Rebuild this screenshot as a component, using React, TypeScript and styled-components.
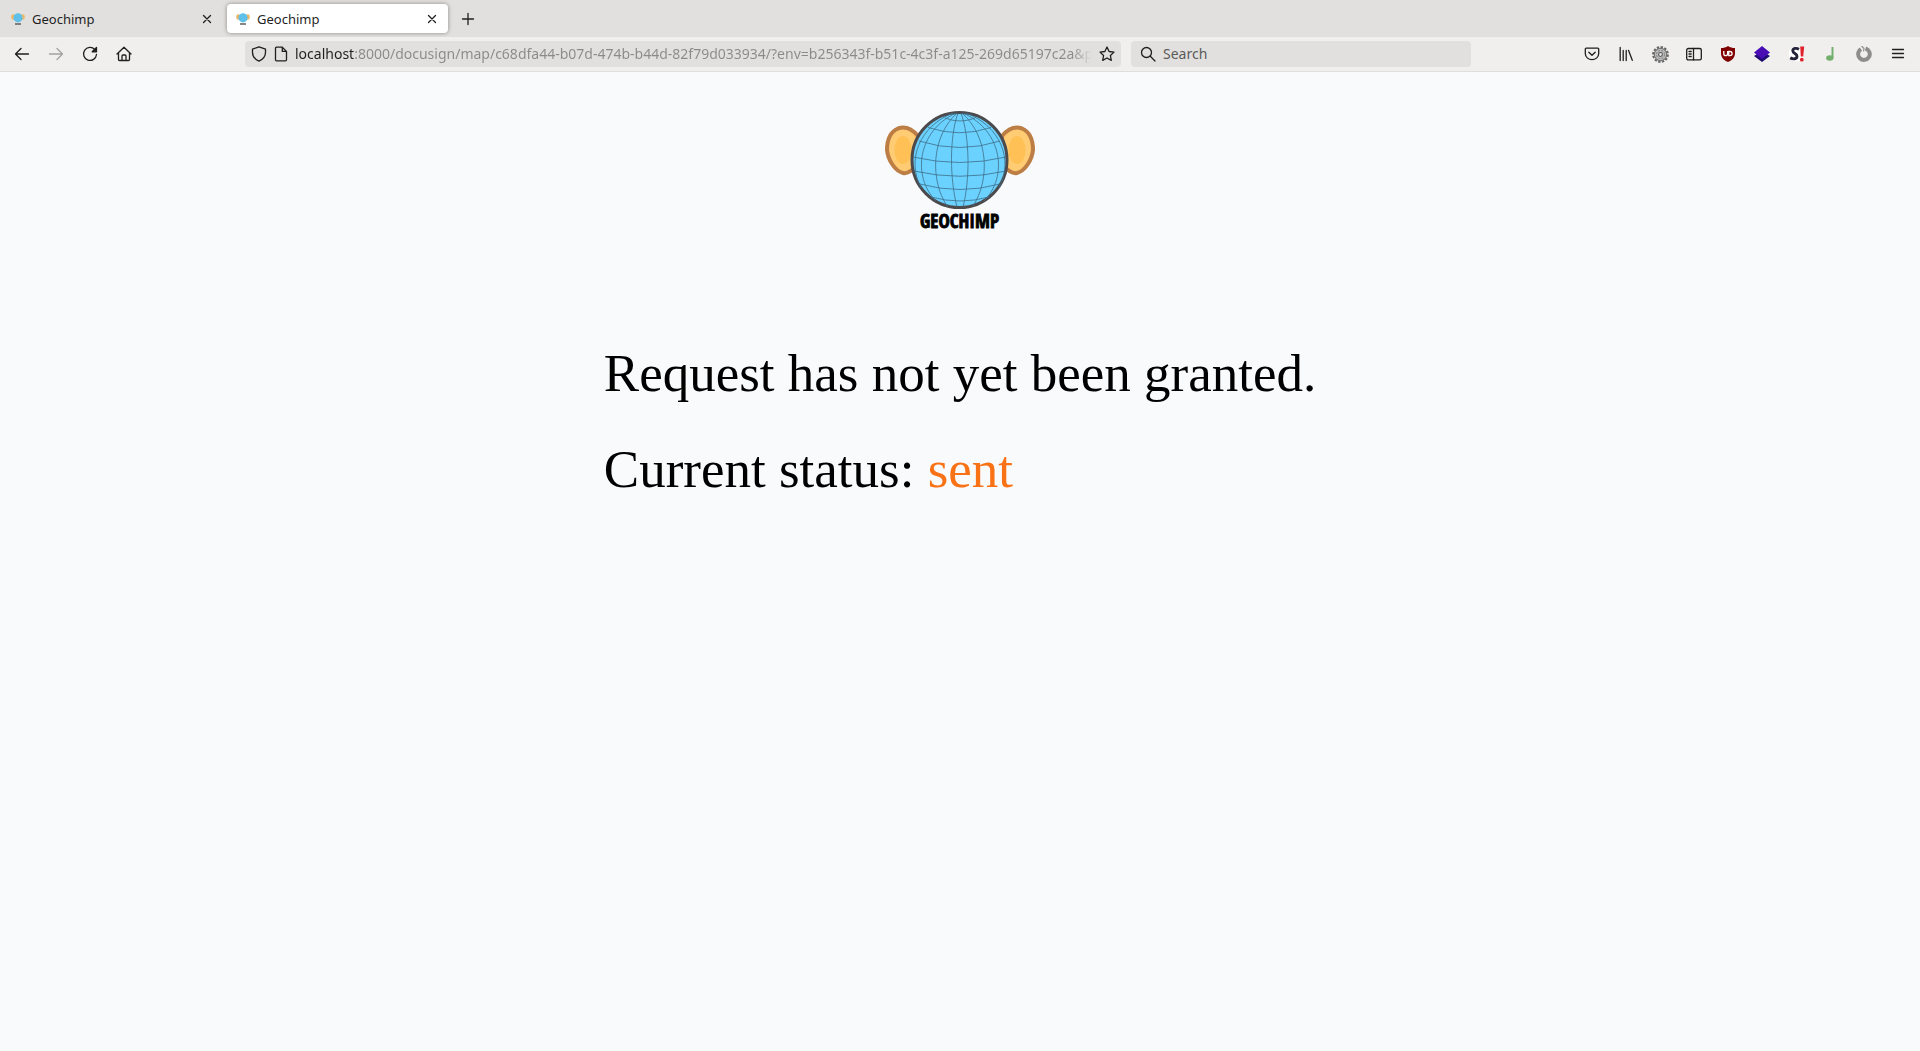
import React, { useState } from "react";
import styled, { createGlobalStyle } from "styled-components";

const ui = '"Noto Sans", "Open Sans", sans-serif';
const ink = "#1f1f1f";

const GlobalStyle = createGlobalStyle`
  *, *::before, *::after { box-sizing: border-box; }
  html, body { margin: 0; background: #f9fafc; }
  button { font: inherit; color: inherit; background: none; border: 0; padding: 0; }
  svg { display: block; }
`;

const Window = styled.div`
  min-height: 100vh;
  display: flex;
  flex-direction: column;
  font-family: ${ui};
  color: ${ink};
`;

const TabStrip = styled.div`
  display: flex;
  gap: 2px;
  height: 37px;
  padding: 4px 0;
  background: #e1e0de;
`;

const Tab = styled.div<{ $active?: boolean }>`
  display: flex;
  align-items: center;
  width: ${(p) => (p.$active ? "221px" : "225px")};
  padding-right: ${(p) => (p.$active ? "7px" : "9px")};
  border-radius: 4px;
  background: ${(p) => (p.$active ? "#ffffff" : "transparent")};
  box-shadow: ${(p) => (p.$active ? "0 0 4px rgba(0, 0, 0, 0.4)" : "none")};
`;

const TabButton = styled.button<{ $inset: number }>`
  flex: 1;
  align-self: stretch;
  display: flex;
  align-items: center;
  gap: 7px;
  padding-left: ${(p) => p.$inset}px;
  font-size: 13px;
  text-align: left;
`;

const SmallButton = styled.button`
  display: grid;
  place-items: center;
  width: 18px;
  height: 24px;
`;

const NewTab = styled.button`
  display: grid;
  place-items: center;
  width: 36px;
`;

const Toolbar = styled.div`
  display: flex;
  align-items: center;
  height: 35px;
  padding: 0 5px;
  background: #f0efed;
  border-bottom: 1px solid #dfdedc;
`;

const ToolGroup = styled.nav`
  display: flex;
`;

const ToolButton = styled.button`
  display: grid;
  place-items: center;
  width: 34px;
  height: 32px;

  &:disabled { color: #a3a2a1; }
`;

const Spacer = styled.div<{ $grow: number }>`
  flex: ${(p) => p.$grow} 1 0;
`;

const Field = styled.form<{ $grow: number }>`
  flex: ${(p) => p.$grow} 1 0;
  display: flex;
  align-items: center;
  gap: 6px;
  height: 26px;
  padding: 0 5px 0 6px;
  border-radius: 4px;
  background: #e1e0de;
`;

const SearchField = styled(Field)`
  padding: 0 3px 0 8px;
`;

const FieldInput = styled.input`
  flex: 1;
  min-width: 0;
  height: 26px;
  padding: 0 0 2px;
  border: 0;
  outline: 0;
  background: none;
  font-family: ${ui};
  font-size: 14px;
  color: #5b5b5a;

  &::placeholder { color: #5b5b5a; opacity: 1; }
`;

const AddressInput = styled(FieldInput)`
  color: transparent;
  background: linear-gradient(90deg, ${ink} 60px, #8b8a89 60px, #8b8a89 calc(100% - 20px), transparent);
  -webkit-background-clip: text;
  background-clip: text;
`;

const Page = styled.main`
  flex: 1;
  display: flex;
  flex-direction: column;
  align-items: center;
  gap: 109px;
  padding: 32px;
  background: #f9fafc;
`;

const Message = styled.section`
  display: flex;
  flex-direction: column;
  gap: 48px;
  font-family: "Liberation Serif", serif;
  font-size: 53px;
  line-height: 48px;
  color: #000000;
`;

const Line = styled.p`
  margin: 0;
`;

const Status = styled.span`
  color: #f97316;
`;

const strokeProps = {
  fill: "none",
  stroke: "currentColor",
  strokeWidth: 1.3,
  strokeLinecap: "round" as const,
  strokeLinejoin: "round" as const,
};

function Icon({ children, size = 16 }: { children: React.ReactNode; size?: number }) {
  return (
    <svg width={size} height={size} viewBox="0 0 16 16" aria-hidden="true" {...strokeProps}>
      {children}
    </svg>
  );
}

function Favicon() {
  return (
    <svg width="14" height="14" viewBox="0 0 14 14" aria-hidden="true">
      <ellipse cx="2.2" cy="5" rx="2" ry="2.8" fill="#efb866" />
      <ellipse cx="11.8" cy="5" rx="2" ry="2.8" fill="#efb866" />
      <circle cx="7" cy="5.8" r="4.6" fill="#5fc0ea" />
      <path d="M4 12h6" stroke="#555" strokeWidth="1.4" />
    </svg>
  );
}

function CloseIcon() {
  return (
    <Icon>
      <path d="M4.5 4.5l7 7M11.5 4.5l-7 7" />
    </Icon>
  );
}

function Ear() {
  return (
    <>
      <path
        d="M34 32C28 25 21 22 14 24.5C6 28 3 37 3 46C4 56 11 67 19 69C24 70 28 67 33 61Z"
        fill="#ffcc73"
        stroke="#bd7e45"
        strokeWidth="4"
      />
      <ellipse cx="19" cy="46" rx="8.5" ry="14" fill="#ffc155" />
    </>
  );
}

function Logo() {
  return (
    <svg width="152" height="136" viewBox="0 0 152 136" role="img" aria-label="Geochimp">
      <Ear />
      <g transform="translate(152 0) scale(-1 1)">
        <Ear />
      </g>
      <circle cx="75.5" cy="56" r="47.5" fill="#6bd1ff" stroke="#4c4a4d" strokeWidth="3" />
      <g fill="none" stroke="#3d6f88" strokeWidth="0.8">
        <path d="M61 14Q76 20 91 14" />
        <path d="M44 23.5Q76 34 107 23.5" />
        <path d="M35 37Q76 50 116 37" />
        <path d="M29 53Q76 64 122 53" />
        <path d="M30 67Q76 77.5 122 67" />
        <path d="M36 80Q76 91 116 80" />
        <path d="M47 93Q76 101 105 93" />
        <path d="M74 9C65 34 66 76 73 103" />
        <path d="M73 9C47 33 46 76 63 102" />
        <path d="M72 9C33 27 28 73 52 97" />
        <path d="M69 9C36 22 22 55 37 84" />
        <path d="M77 9C86 34 86 76 79 103" />
        <path d="M78 9C105 33 106 76 89 102" />
        <path d="M79 9C119 27 124 73 100 97" />
        <path d="M82 9C116 22 130 55 115 84" />
      </g>
      <text
        x="75.5"
        y="124"
        textAnchor="middle"
        fontFamily='Impact, "Open Sans Condensed", "Noto Sans ExtraCondensed", "Noto Sans Condensed", "Roboto Condensed", "Liberation Sans", sans-serif'
        fontSize="19"
        fontWeight="900"
        fill="#000"
        stroke="#000"
        strokeWidth="0.8"
      >
        GEOCHIMP
      </text>
    </svg>
  );
}

function GearIcon() {
  return (
    <svg width="17" height="17" viewBox="0 0 16 16" aria-hidden="true">
      <circle cx="8" cy="8" r="6.9" fill="none" stroke="#666" strokeWidth="2" strokeDasharray="2.2 1.4" />
      <circle cx="8" cy="8" r="5.8" fill="#bdbdbd" stroke="#707070" strokeWidth="1" />
      <circle cx="8" cy="8" r="3.8" fill="none" stroke="#8a8a8a" strokeWidth="1" strokeDasharray="2 1" />
      <circle cx="8" cy="8" r="1.8" fill="#e4e4e4" stroke="#555" strokeWidth="1" />
    </svg>
  );
}

const extensions: { label: string; art: React.ReactNode }[] = [
  {
    label: "Save to Pocket",
    art: (
      <Icon>
        <path d="M2.2 2.2h11.6c.5 0 .9.4.9.9v4.4a6.7 6.2 0 0 1-13.4 0V3.1c0-.5.4-.9.9-.9z" />
        <path d="M4.8 6.2L8 9.3l3.2-3.1" />
      </Icon>
    ),
  },
  {
    label: "Library",
    art: (
      <Icon>
        <path d="M2.2 1.5v13M5.2 4.5v10M8.2 4.5v10M10.5 4.3l3.8 10" />
      </Icon>
    ),
  },
  { label: "Settings", art: <GearIcon /> },
  {
    label: "Sidebars",
    art: (
      <Icon>
        <rect x="0.7" y="2.5" width="14.6" height="11.4" rx="1.6" />
        <path d="M7.5 2.5v11.4M3 5.5h2.2M3 8h2.2M3 10.5h2.2" />
      </Icon>
    ),
  },
  {
    label: "uBlock Origin",
    art: (
      <svg width="16" height="16" viewBox="0 0 16 16" aria-hidden="true">
        <path d="M8 0C6 1.5 3.5 2 1 2v5c0 4.5 2.5 7 7 9c4.5-2 7-4.5 7-9V2C12.5 2 10 1.5 8 0z" fill="#800000" />
        <path d="M3.8 5v2.8a1.9 1.9 0 0 0 3.8 0V5M8.8 5.5h1.2a2.1 2.1 0 0 1 0 4.2H8.8z" fill="none" stroke="#fff" strokeWidth="1.3" />
      </svg>
    ),
  },
  {
    label: "Layers",
    art: (
      <svg width="16" height="16" viewBox="0 0 16 16" aria-hidden="true">
        <path d="M0 10l8-5 8 5-8 6z" fill="#1f0a70" />
        <path d="M0 6.5L8 0l8 6.5L8 13z" fill="#4a0db5" />
      </svg>
    ),
  },
  {
    label: "S!",
    art: (
      <svg width="17" height="16" viewBox="0 0 17 16" aria-hidden="true">
        <circle cx="8" cy="8" r="7.5" fill="#fff" />
        <path d="M11 3.2C8.5 1.8 4.8 2 4.8 4.8C4.8 7.6 9 7.4 9 10.2C9 13.2 5 13.4 2.2 11.9" fill="none" stroke="#25233a" strokeWidth="2.9" />
        <path d="M12.2 0.5h4l-1 10h-2.4z" fill="#e0202c" />
        <circle cx="13.8" cy="13.7" r="1.9" fill="#e0202c" />
      </svg>
    ),
  },
  {
    label: "Music note",
    art: (
      <svg width="16" height="16" viewBox="0 0 16 16" aria-hidden="true">
        <path d="M9.5 1h2v11h-2z" fill="#72b06c" />
        <ellipse cx="7.8" cy="12" rx="3.7" ry="2.7" fill="#72b06c" />
      </svg>
    ),
  },
  {
    label: "Ring",
    art: (
      <svg width="16" height="16" viewBox="0 0 16 16" aria-hidden="true">
        <path d="M9.5 2.5a5.8 5.8 0 1 1-4.5.6" fill="none" stroke="#8d8d8d" strokeWidth="4" />
        <path d="M5.5 0l2.5 2.5-.5 2.8" fill="none" stroke="#8d8d8d" strokeWidth="1.2" />
      </svg>
    ),
  },
  {
    label: "Menu",
    art: (
      <Icon>
        <path d="M2.5 3.5h11M2.5 7.5h11M2.5 11.5h11" />
      </Icon>
    ),
  },
];

const address =
  "localhost:8000/docusign/map/c68dfa44-b07d-474b-b44d-82f79d033934/?env=b256343f-b51c-4c3f-a125-269d65197c2a&pr";

export default function App() {
  const [url, setUrl] = useState(address);
  return (
    <>
      <GlobalStyle />
      <Window>
        <TabStrip>
          <Tab>
            <TabButton $inset={11}>
              <Favicon />
              Geochimp
            </TabButton>
            <SmallButton aria-label="Close tab">
              <CloseIcon />
            </SmallButton>
          </Tab>
          <Tab $active>
            <TabButton $inset={9}>
              <Favicon />
              Geochimp
            </TabButton>
            <SmallButton aria-label="Close tab">
              <CloseIcon />
            </SmallButton>
          </Tab>
          <NewTab aria-label="New tab">
            <Icon>
              <path d="M8 2.5v11M2.5 8h11" />
            </Icon>
          </NewTab>
        </TabStrip>
        <Toolbar>
          <ToolGroup aria-label="Navigation">
            <ToolButton aria-label="Back">
              <Icon>
                <path d="M1.5 8h13M7 2.5L1.5 8 7 13.5" />
              </Icon>
            </ToolButton>
            <ToolButton aria-label="Forward" disabled>
              <Icon>
                <path d="M1.5 8h13M9 2.5L14.5 8 9 13.5" />
              </Icon>
            </ToolButton>
            <ToolButton aria-label="Reload">
              <Icon>
                <path d="M12.8 3.5A6.5 6.5 0 1 0 14.5 8.5" />
                <path d="M14.5 1.5v4.3h-4.3z" fill="currentColor" />
              </Icon>
            </ToolButton>
            <ToolButton aria-label="Home">
              <Icon>
                <path d="M1 8L8 1.2 15 8M2.5 7v6.5c0 .6.4 1 1 1h9c.6 0 1-.4 1-1V7M6 14.5V10c0-.6.4-1 1-1h2c.6 0 1 .4 1 1v4.5" />
              </Icon>
            </ToolButton>
          </ToolGroup>
          <Spacer $grow={104} />
          <Field $grow={865} onSubmit={(e) => e.preventDefault()}>
            <Icon>
              <path d="M8 .8l6.5 2.4v3.3c0 4-2.5 6.8-6.5 8.7C4 13.3 1.5 10.5 1.5 6.5V3.2z" />
            </Icon>
            <Icon>
              <path d="M3.5 1.2h5.8L13.5 5.4v8.4c0 .6-.4 1-1 1h-9c-.6 0-1-.4-1-1V2.2c0-.6.4-1 1-1zM9.3 1.2v4.2h4.2z" />
            </Icon>
            <AddressInput aria-label="Address" value={url} onChange={(e) => setUrl(e.target.value)} />
            <SmallButton type="button" aria-label="Bookmark this page">
              <Icon>
                <path d="M8 1l2.1 4.5 4.9.6-3.6 3.4.9 4.9L8 12l-4.3 2.4.9-4.9L1 6.1l4.9-.6z" />
              </Icon>
            </SmallButton>
          </Field>
          <Spacer $grow={10} />
          <SearchField $grow={329} onSubmit={(e) => e.preventDefault()}>
            <SmallButton aria-label="Submit search">
              <Icon>
                <circle cx="6.5" cy="6.5" r="5" />
                <path d="M10.3 10.3L15 15" />
              </Icon>
            </SmallButton>
            <FieldInput aria-label="Search" placeholder="Search" />
          </SearchField>
          <Spacer $grow={104} />
          <ToolGroup aria-label="Extensions">
            {extensions.map((e) => (
              <ToolButton key={e.label} aria-label={e.label}>
                {e.art}
              </ToolButton>
            ))}
          </ToolGroup>
        </Toolbar>
        <Page>
          <Logo />
          <Message>
            <Line>Request has not yet been granted.</Line>
            <Line>
              Current status: <Status>sent</Status>
            </Line>
          </Message>
        </Page>
      </Window>
    </>
  );
}
